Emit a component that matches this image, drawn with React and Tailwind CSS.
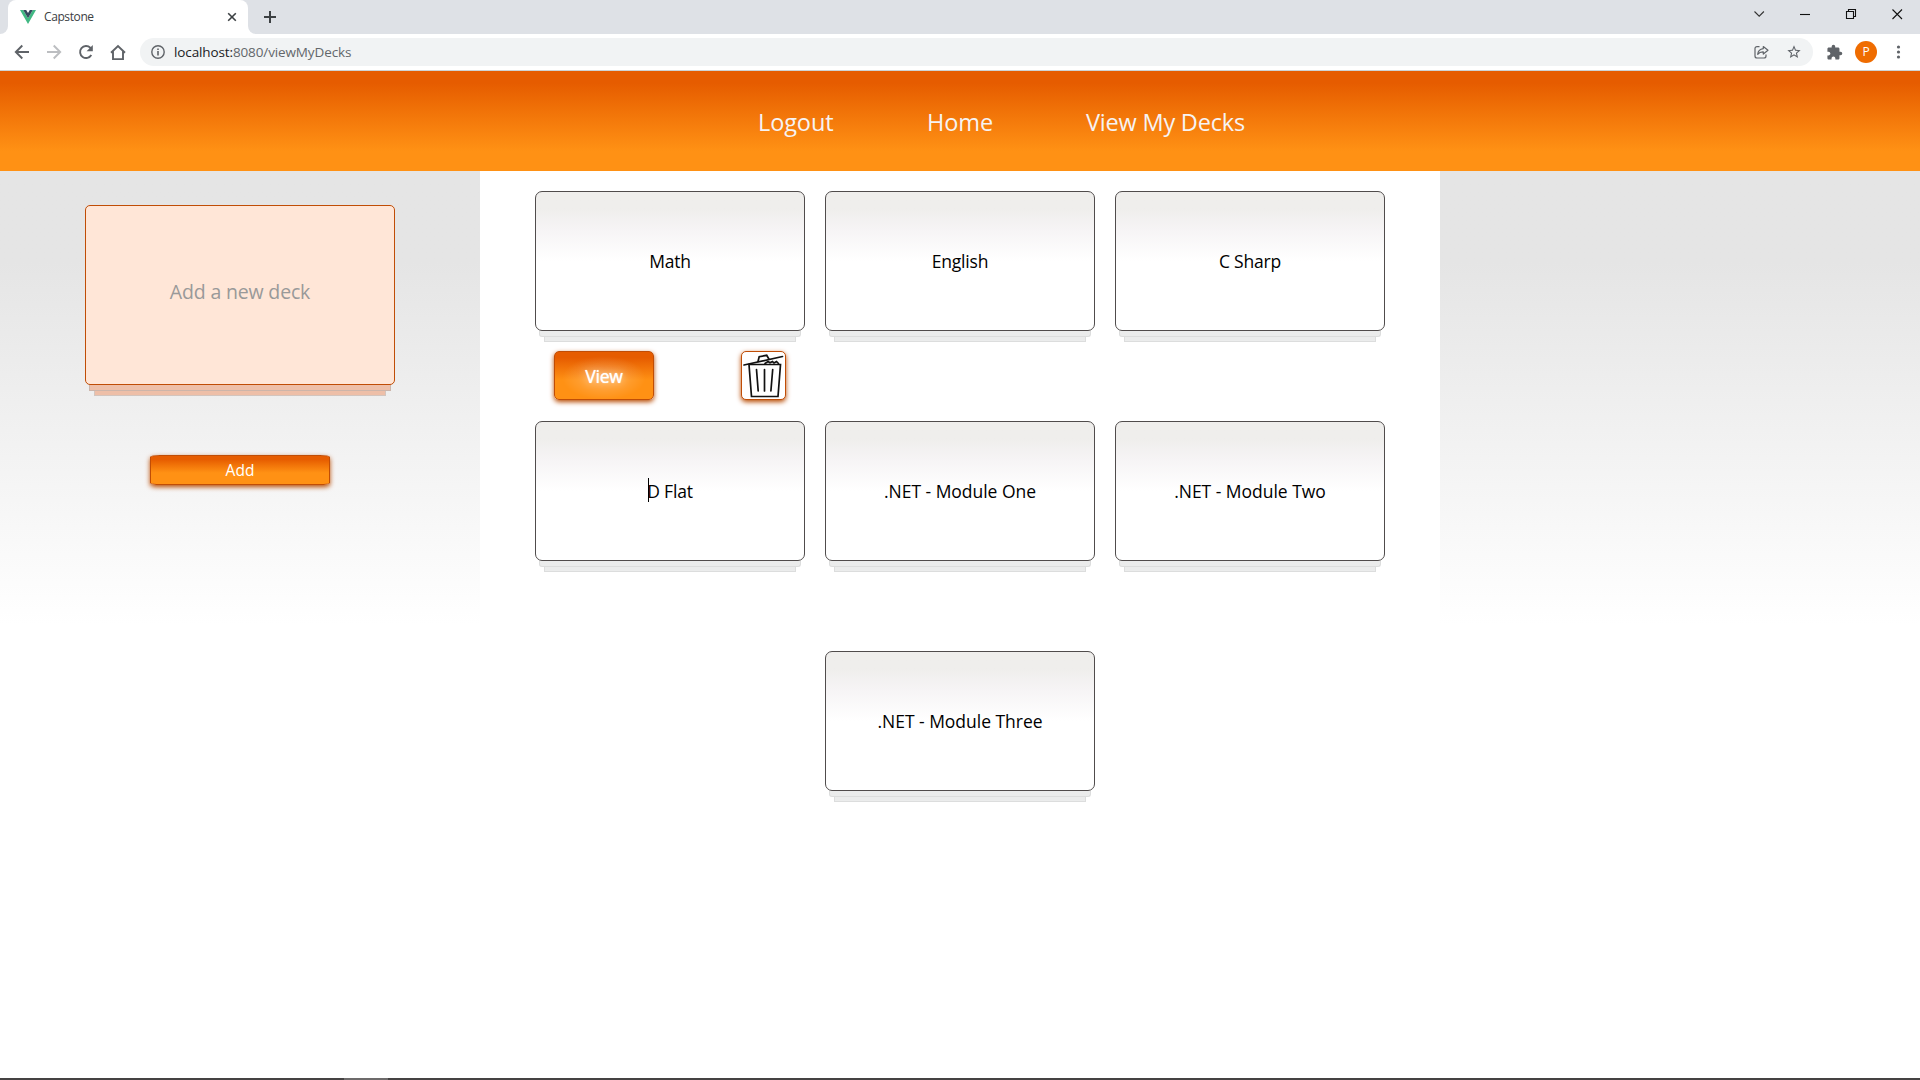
const decks = [
  { name: 'Math', active: true },
  { name: 'English' },
  { name: 'C Sharp' },
  { name: 'D Flat', caret: true },
  { name: '.NET - Module One', long: true },
  { name: '.NET - Module Two', long: true },
  { name: '.NET - Module Three', long: true },
];

function VueLogo() {
  return (
    <svg width="16" height="14" viewBox="0 0 16 14" className="shrink-0">
      <path d="M0 0h3.2L8 8.3 12.8 0H16L8 13.9z" fill="#41b883" />
      <path d="M3.2 0h3L8 3.1 9.8 0h3L8 8.3z" fill="#35495e" />
    </svg>
  );
}

function WindowControls() {
  return (
    <svg width="170" height="34" viewBox="0 0 170 34" fill="none" stroke="#111" strokeWidth="1.1">
      <path d="M4.5 11.5l4.7 4.7 4.7-4.7" stroke="#333" />
      <path d="M50 14.5h10" />
      <path d="M96.5 11.5h7v7h-7zM98.5 11.5v-2h7v7h-2" />
      <path d="M142.500 9.500l9.500 9.500M152 9.500l-9.500 9.500" />
    </svg>
  );
}

function TabStrip() {
  return (
    <div className="flex h-[34px] justify-between bg-[#dee1e6]">
      <div className="flex">
        <div className="w-2 bg-white">
          <div className="h-full rounded-br-lg bg-[#dee1e6]" />
        </div>
        <div className="flex w-60 items-center rounded-t-lg bg-white pl-3 pr-[11px] text-[12px] text-[#3c4043]">
          <VueLogo />
          <span className="ml-2 flex-1 tracking-[-0.4px]">Capstone</span>
          <svg width="10" height="10" viewBox="0 0 10 10" stroke="#3c4043" strokeWidth="1.6">
            <path d="M1.200 1.200l7.600 7.600M8.800 1.200L1.200 8.800" />
          </svg>
        </div>
        <div className="w-2 bg-white">
          <div className="h-full rounded-bl-lg bg-[#dee1e6]" />
        </div>
        <svg width="28" height="34" viewBox="0 0 28 34" stroke="#3c4043" strokeWidth="2">
          <path d="M8 17h12M14 11v12" />
        </svg>
      </div>
      <WindowControls />
    </div>
  );
}

function Toolbar() {
  return (
    <div className="flex h-[37px] items-center border-b border-[#cfd3d4] bg-white pr-2.5">
      <svg width="140" height="36" viewBox="0 0 140 36" fill="none" stroke="#5f6368" strokeWidth="1.9" className="shrink-0">
        <path d="M29 18H16M22.300 11.500L15.800 18l6.500 6.500" />
        <path d="M47 18h13M53.700 11.500l6.500 6.500-6.500 6.500" stroke="#bcbec1" />
        <path d="M91.300 21a6 6 0 1 1-1-7.300l1.400 1.400" />
        <path d="M92.800 11v6.200h-6.200z" fill="#5f6368" stroke="none" />
        <path d="M111 18.700l7-6.600 7 6.600M113 17.500v7.600h10v-7.600" />
      </svg>
      <div className="flex h-7 flex-1 items-center rounded-full bg-[#f1f3f4] pl-[11px] pr-[11px]">
        <svg width="14" height="14" viewBox="0 0 14 14" fill="none" stroke="#5f6368" strokeWidth="1.400">
          <circle cx="7" cy="7" r="6.200" />
          <path d="M7 6v4.500M7 3.400v1.600" strokeWidth="1.600" />
        </svg>
        <span className="ml-[9px] flex-1 text-[13.500px] tracking-[-0.12px] text-[#63676b]">
          <span className="text-[#202124]">localhost:</span>8080/viewMyDecks
        </span>
        <svg width="15" height="14" viewBox="0 0 15 14" fill="none" stroke="#5f6368" strokeWidth="1.200">
          <path d="M5.500 1.600H3a2 2 0 0 0-2 2V11a2 2 0 0 0 2 2h7a2 2 0 0 0 2-2V9.500" />
          <path d="M9.300 1.500L14 5.200 9.300 9V6.900C6.700 6.800 5 7.600 3.700 9.300 4 6.300 5.800 4 9.300 3.600z" strokeLinejoin="round" />
        </svg>
        <svg width="16" height="16" viewBox="0 0 24 24" fill="#5f6368" className="ml-[17px]">
          <path d="M22 9.240l-7.190-.62L12 2 9.190 8.630 2 9.240l5.460 4.730L5.820 21 12 17.270 18.180 21l-1.630-7.030L22 9.240zM12 15.400l-3.760 2.270 1-4.280-3.320-2.880 4.380-.38L12 6.100l1.710 4.040 4.380.38-3.320 2.880 1 4.280L12 15.400z" />
        </svg>
      </div>
      <svg width="17" height="17" viewBox="0 0 24 24" fill="#5f6368" className="ml-[13px]">
        <path d="M20.500 11H19V7c0-1.100-.9-2-2-2h-4V3.500a2.500 2.500 0 0 0-5 0V5H4c-1.100 0-1.990.9-1.990 2v3.800H3.500c1.490 0 2.700 1.210 2.700 2.700s-1.210 2.700-2.700 2.700H2V20c0 1.100.9 2 2 2h3.800v-1.500c0-1.490 1.210-2.700 2.700-2.700s2.700 1.210 2.700 2.700V22H17c1.100 0 2-.9 2-2v-4h1.500a2.500 2.500 0 0 0 0-5z" />
      </svg>
      <div className="ml-3 mr-px flex size-[22px] items-center justify-center rounded-full bg-[#ef6c00] text-[12px] text-white">P</div>
      <svg width="32" height="20" viewBox="0 0 32 20" fill="#5f6368" className="shrink-0">
        <circle cx="20.500" cy="5" r="1.600" />
        <circle cx="20.500" cy="10" r="1.600" />
        <circle cx="20.500" cy="15" r="1.600" />
      </svg>
    </div>
  );
}

function TrashIcon() {
  return (
    <svg width="43" height="47" viewBox="0 0 43 47" fill="none" stroke="#111" strokeWidth="1.700" strokeLinecap="round">
      <path d="M2 13L40.500 4.500" />
      <path d="M16 9.500l1.200-4.800 7.500-1.400 2.200 3.700" />
      <path d="M7 12.500h31.500L36 44.500H9.500z" />
      <path d="M14.500 17.500l1.700 21.500M22.500 17.500V39M30.700 17.500L28.900 39" />
      <path d="M23 11.500l3-2 2 1.300 2.500-1.300 1.500 1.500 2.500-1.500 2 2" strokeWidth="1.700" />
    </svg>
  );
}

function Deck({ deck }) {
  return (
    <div className="h-[230px] w-[270px]">
      <div className="flex h-[140px] items-center justify-center rounded-[7px] border border-[#504c4c] bg-linear-to-b from-[#efeeec] from-12% via-[#f6f4f5] via-27% to-white to-50% text-[17.500px] text-black">
        <span className={deck.long ? 'tracking-[-0.03px]' : 'relative tracking-[-0.2px]'}>
          {deck.caret && <i className="absolute left-px top-0 h-6 w-px bg-black" />}
          {deck.name}
        </span>
      </div>
      <div className="mx-1 h-1.5 rounded-b-[3px] border border-t-0 border-[#dcdddd] bg-[#ebecec]" />
      <div className="mx-[9px] h-[5px] border border-t-0 border-[#dcdddd] bg-[#ebecec]" />
      {deck.active && (
        <div className="mt-[9px] flex justify-between pl-[19px] pr-[19px]">
          <button className="h-[49px] w-[100px] rounded-[5px] border border-[#c04d06] bg-[radial-gradient(ellipse_at_50%_55%,#ffffff48,#ffffff00_60%),linear-gradient(#e65c00_12%,#ff9114_60%)] pt-px text-[17.500px] font-medium tracking-[-0.2px] text-white shadow-[0_2px_5px_#b84a00] [text-shadow:0_0_1px_#ffffff,0_0_8px_#ffffffb0]">
            View
          </button>
          <button className="h-[49px] w-[45px] rounded-[5px] border border-[#c04d06] bg-white shadow-[0_2px_5px_#b84a00]">
            <TrashIcon />
          </button>
        </div>
      )}
    </div>
  );
}

function AddDeck() {
  return (
    <aside className="flex w-[480px] flex-col items-center bg-linear-to-b from-[#e5e5e5] from-10% to-white to-50% pt-[34px]">
      <div className="flex h-[180px] w-[310px] items-center justify-center rounded-[5px] border border-[#c04d06] bg-[#ffe6d7] pb-[6px] text-[19.500px] tracking-[-0.17px] text-[#999]">
        <span>Add a new deck</span>
      </div>
      <div className="h-1.5 w-[302px] border border-t-0 border-[#cdb5aa] bg-[#eebfa8]" />
      <div className="h-[5px] w-[292px] border border-t-0 border-[#d3c5be] bg-[#eebfa8]" />
      <button className="mt-[59px] h-[30px] w-[180px] rounded-[10px/2px] border border-[#c04d06] bg-linear-to-b from-[#e65c00] from-12% to-[#ff9114] to-60% text-[15.500px] leading-[29px] text-white shadow-[0_2px_5px_#b84a00]">
        Add
      </button>
    </aside>
  );
}

export default function App() {
  return (
    <div className="flex h-[1080px] w-[1920px] flex-col overflow-hidden bg-white font-['Open_Sans',sans-serif]">
      <TabStrip />
      <Toolbar />
      <nav className="flex h-[100px] items-center bg-linear-to-b from-[#e65c00] from-12% to-[#ff9114] to-80% pl-[758px] pt-1 text-[23.500px] tracking-[-0.1px] text-[#f6f3f3]">
        <a className="w-[169px]">Logout</a>
        <a className="w-[159px]">Home</a>
        <a className="tracking-[-0.2px]">View My Decks</a>
      </nav>
      <div className="flex flex-1">
        <AddDeck />
        <main className="flex w-[960px] flex-wrap content-start justify-center gap-x-5 px-10 pt-5">
          {decks.map((d) => (
            <Deck key={d.name} deck={d} />
          ))}
        </main>
        <aside className="w-[480px] bg-linear-to-b from-[#e5e5e5] from-10% to-white to-50%" />
      </div>
      <footer className="h-0.5 bg-[#454343]">
        <div className="ml-[344px] h-full w-11 bg-[#6d6b6b]" />
      </footer>
    </div>
  );
}
